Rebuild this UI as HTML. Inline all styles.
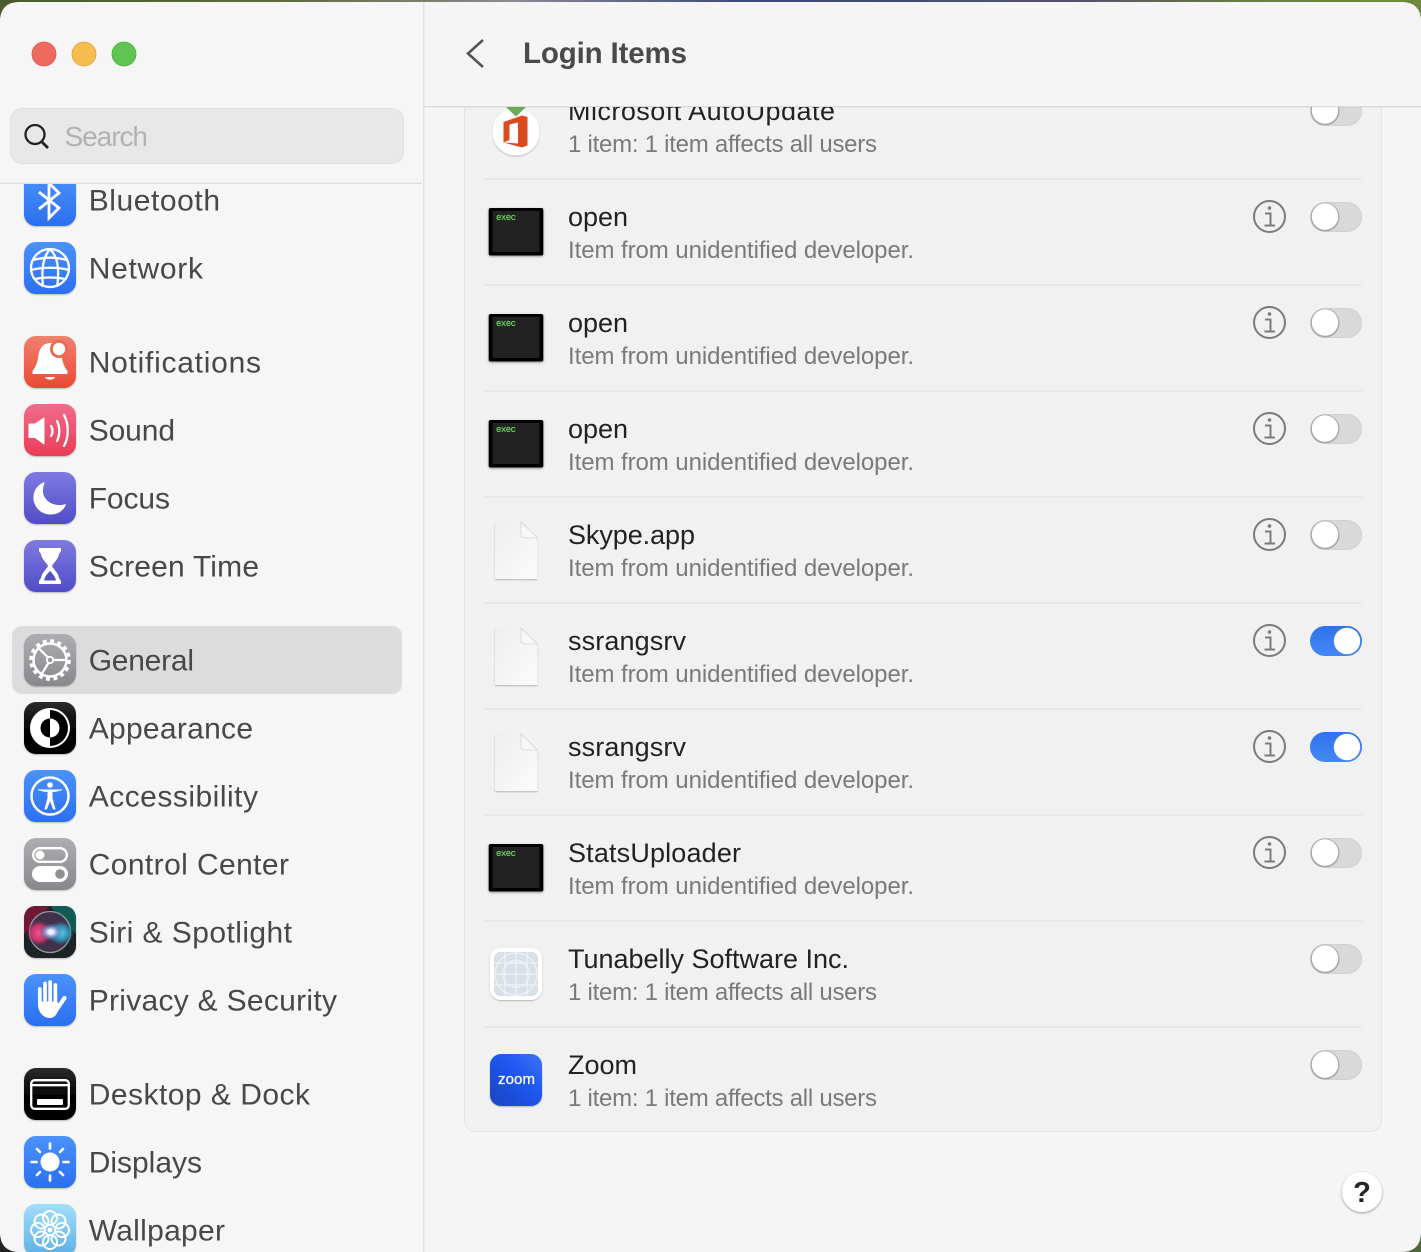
<!DOCTYPE html>
<html lang="en"><head><meta charset="utf-8"><title>Login Items</title>
<style>
html,body{margin:0;padding:0;width:1421px;height:1252px;overflow:hidden;background:#333}
svg{display:block}
text{font-family:"Liberation Sans",sans-serif}
.s{font-size:30px;fill:#484848}
.t{font-size:27px;fill:#222}
.u{font-size:24px;fill:#7a7a7a}
.x{font-size:9px;fill:#6fdc60;stroke:#6fdc60;stroke-width:.15}
</style></head><body>
<svg xmlns="http://www.w3.org/2000/svg" width="1421" height="1252" viewBox="0 0 1421 1252">
<defs>
<linearGradient id="wall" x1="0" x2="1" y1="0" y2="0"><stop offset="0" stop-color="#4a5a2a"/><stop offset=".2" stop-color="#5d6b3f"/><stop offset=".36" stop-color="#8c8a90"/><stop offset=".52" stop-color="#3e4a78"/><stop offset=".75" stop-color="#50506a"/><stop offset=".88" stop-color="#6c7d45"/><stop offset="1" stop-color="#6f8a3c"/></linearGradient>
<linearGradient id="blue" x1="0" x2="0" y1="0" y2="1"><stop offset="0" stop-color="#4a92fb"/><stop offset="1" stop-color="#2b6ff0"/></linearGradient>
<linearGradient id="red" x1="0" x2="0" y1="0" y2="1"><stop offset="0" stop-color="#f08070"/><stop offset="1" stop-color="#ea4a34"/></linearGradient>
<linearGradient id="pink" x1="0" x2="0" y1="0" y2="1"><stop offset="0" stop-color="#f06c8a"/><stop offset="1" stop-color="#ea3c58"/></linearGradient>
<linearGradient id="pur" x1="0" x2="0" y1="0" y2="1"><stop offset="0" stop-color="#7f7ae0"/><stop offset="1" stop-color="#504dc8"/></linearGradient>
<linearGradient id="gray" x1="0" x2="0" y1="0" y2="1"><stop offset="0" stop-color="#adadb2"/><stop offset="1" stop-color="#87878c"/></linearGradient>
<linearGradient id="blk" x1="0" x2="0" y1="0" y2="1"><stop offset="0" stop-color="#2b2b2b"/><stop offset=".6" stop-color="#000"/></linearGradient>
<linearGradient id="sky" x1="0" x2="0" y1="0" y2="1"><stop offset="0" stop-color="#a2def8"/><stop offset="1" stop-color="#5cb0e6"/></linearGradient>
<linearGradient id="tog" x1="0" x2="0" y1="0" y2="1"><stop offset="0" stop-color="#2f72ee"/><stop offset="1" stop-color="#4488f5"/></linearGradient>
<linearGradient id="zm" x1="1" x2="0" y1="0" y2="1"><stop offset="0" stop-color="#3f74f2"/><stop offset=".4" stop-color="#2058f2"/><stop offset="1" stop-color="#1a44c0"/></linearGradient>
<linearGradient id="doc" x1="0" x2="1" y1="0" y2="1"><stop offset="0" stop-color="#eeeeee"/><stop offset="1" stop-color="#fbfbfb"/></linearGradient>
<radialGradient id="siriA" cx=".5" cy=".5" r=".5"><stop offset="0" stop-color="#ffffff"/><stop offset=".25" stop-color="#e4e8fa"/><stop offset=".6" stop-color="#7a90d8" stop-opacity=".75"/><stop offset="1" stop-color="#4a5a80" stop-opacity="0"/></radialGradient>
<radialGradient id="siriR" cx=".5" cy=".5" r=".5"><stop offset="0" stop-color="#f8508c"/><stop offset=".6" stop-color="#d83870" stop-opacity=".85"/><stop offset="1" stop-color="#a02050" stop-opacity="0"/></radialGradient>
<radialGradient id="siriC" cx=".5" cy=".5" r=".5"><stop offset="0" stop-color="#58d8f0"/><stop offset=".6" stop-color="#3098c0" stop-opacity=".85"/><stop offset="1" stop-color="#208090" stop-opacity="0"/></radialGradient>
<filter id="sh" x="-10%" y="-10%" width="120%" height="125%"><feDropShadow dx="0" dy="1" stdDeviation=".8" flood-color="#000" flood-opacity=".25"/></filter>
<filter id="sh2" x="-20%" y="-20%" width="140%" height="150%"><feDropShadow dx="0" dy="1" stdDeviation="1.400" flood-color="#000" flood-opacity=".4"/></filter>
<clipPath id="sideclip"><rect x="0" y="184" width="422" height="1068"/></clipPath>
<clipPath id="mainclip"><rect x="424" y="107" width="997" height="1145"/></clipPath>
<clipPath id="win"><path d="M20 2H1401Q1421 2 1421 22V1232Q1421 1252 1401 1252H20Q0 1252 0 1232V22Q0 2 20 2Z"/></clipPath>

<g id="ext"><rect x="488.700" y="208" width="54.600" height="47.500" rx="2" fill="#000" filter="url(#sh2)"/><rect x="492.500" y="211" width="47" height="41" fill="#222"/></g>
<g id="paper"><g filter="url(#sh)"><path d="M495 522H521L537.500 538V579H495Z" fill="url(#doc)"/></g><path d="M521 522V534Q521 538 525 538H537.500Z" fill="#f7f7f7" stroke="#d4d4d4" stroke-width=".8"/></g>
<g id="info" fill="none" stroke="#7b7b7b"><circle cx="1269.500" cy="216.500" r="15.500" stroke-width="2"/><circle cx="1269.500" cy="208" r="1.800" fill="#7b7b7b" stroke="none"/><path d="M1265 213.500H1270.500V225M1264.500 225.500H1275" stroke-width="2"/></g>
<g id="off"><rect x="1310" y="202" width="52" height="30" rx="15" fill="#d9d9d9"/><rect x="1310.500" y="202.500" width="51" height="29" rx="14.500" fill="none" stroke="#000" stroke-opacity=".04"/><circle cx="1325" cy="217" r="14.500" fill="#a8a8a8"/><circle cx="1325" cy="216.500" r="13.200" fill="#fff"/></g>
<g id="on"><rect x="1310" y="202" width="52" height="30" rx="15" fill="url(#tog)"/><circle cx="1347" cy="217" r="13.200" fill="#fff"/></g>
</defs>

<rect width="1421" height="1252" fill="url(#wall)"/>
<rect y="1230" width="60" height="22" fill="#222"/>
<rect x="1395" y="1225" width="26" height="27" fill="#4c6a3a"/>

<g clip-path="url(#win)">
<rect width="1421" height="1252" fill="#f5f5f5"/>
<rect width="423" height="1252" fill="#f6f6f6"/>
<rect x="423" y="0" width="1.500" height="1252" fill="#e3e3e3"/>

<!-- list panel -->
<rect x="464.500" y="80" width="917" height="1051.500" rx="11" fill="#f1f1f1" stroke="#e5e5e5"/>

<g clip-path="url(#mainclip)">
<!-- Microsoft row -->
<circle cx="516" cy="132" r="23.500" fill="#fff" filter="url(#sh)"/>
<path d="M504 105H528L516 116.500Z" fill="#6cab52"/>
<path d="M503.500 122L522 115.500L527.500 117V145.500L522 147.500L503.500 142.500L518 143.500V122.500L509.500 124.500V140L503.500 142.500Z" fill="#dc4a22"/>
<text class="t" x="568" y="120" textLength="267">Microsoft AutoUpdate</text>
<text class="u" x="568" y="152" textLength="309">1 item: 1 item affects all users</text>
<use href="#off" y="-106"/>

<g fill="#e8e8e8">
<rect x="484" y="178" width="878" height="2"/><rect x="484" y="284" width="878" height="2"/><rect x="484" y="390" width="878" height="2"/><rect x="484" y="496" width="878" height="2"/><rect x="484" y="602" width="878" height="2"/><rect x="484" y="708" width="878" height="2"/><rect x="484" y="814" width="878" height="2"/><rect x="484" y="920" width="878" height="2"/><rect x="484" y="1026" width="878" height="2"/>
</g>

<!-- open 1 -->
<use href="#ext"/><text class="x" x="496" y="220" textLength="20" style="font-family:'Liberation Mono',monospace">exec</text>
<text class="t" x="568" y="226" textLength="60">open</text>
<text class="u" x="568" y="258" textLength="346">Item from unidentified developer.</text>
<use href="#info"/><use href="#off"/>
<!-- open 2 -->
<use href="#ext" y="106"/><text class="x" x="496" y="326" textLength="20" style="font-family:'Liberation Mono',monospace">exec</text>
<text class="t" x="568" y="332" textLength="60">open</text>
<text class="u" x="568" y="364" textLength="346">Item from unidentified developer.</text>
<use href="#info" y="106"/><use href="#off" y="106"/>
<!-- open 3 -->
<use href="#ext" y="212"/><text class="x" x="496" y="432" textLength="20" style="font-family:'Liberation Mono',monospace">exec</text>
<text class="t" x="568" y="438" textLength="60">open</text>
<text class="u" x="568" y="470" textLength="346">Item from unidentified developer.</text>
<use href="#info" y="212"/><use href="#off" y="212"/>
<!-- Skype -->
<use href="#paper"/>
<text class="t" x="568" y="544" textLength="127">Skype.app</text>
<text class="u" x="568" y="576" textLength="346">Item from unidentified developer.</text>
<use href="#info" y="318"/><use href="#off" y="318"/>
<!-- ssrangsrv 1 -->
<use href="#paper" y="106"/>
<text class="t" x="568" y="650" textLength="118">ssrangsrv</text>
<text class="u" x="568" y="682" textLength="346">Item from unidentified developer.</text>
<use href="#info" y="424"/><use href="#on" y="424"/>
<!-- ssrangsrv 2 -->
<use href="#paper" y="212"/>
<text class="t" x="568" y="756" textLength="118">ssrangsrv</text>
<text class="u" x="568" y="788" textLength="346">Item from unidentified developer.</text>
<use href="#info" y="530"/><use href="#on" y="530"/>
<!-- StatsUploader -->
<use href="#ext" y="636"/><text class="x" x="496" y="856" textLength="20" style="font-family:'Liberation Mono',monospace">exec</text>
<text class="t" x="568" y="862" textLength="173">StatsUploader</text>
<text class="u" x="568" y="894" textLength="346">Item from unidentified developer.</text>
<use href="#info" y="636"/><use href="#off" y="636"/>
<!-- Tunabelly -->
<rect x="490" y="948" width="52" height="52" rx="11" fill="#fff" filter="url(#sh)"/>
<rect x="494" y="952" width="44" height="44" rx="6" fill="#d9e1e6"/>
<g fill="none" stroke="#eef2f4" stroke-width="1.200"><circle cx="516" cy="974" r="21"/><circle cx="516" cy="974" r="13.500"/><path d="M494 974H538M516 952V996M494 963H538M494 985H538M505 952V996M527 952V996"/></g>
<text class="t" x="568" y="968" textLength="281">Tunabelly Software Inc.</text>
<text class="u" x="568" y="1000" textLength="309">1 item: 1 item affects all users</text>
<use href="#off" y="742"/>
<!-- Zoom -->
<rect x="490" y="1054" width="52" height="52" rx="11" fill="url(#zm)" filter="url(#sh)"/>
<text x="498" y="1084" font-size="15" textLength="37" fill="#fff" stroke="#fff" stroke-width=".25">zoom</text>
<text class="t" x="568" y="1074" textLength="69">Zoom</text>
<text class="u" x="568" y="1106" textLength="309">1 item: 1 item affects all users</text>
<use href="#off" y="848"/>
</g>

<!-- header -->
<rect x="424.500" y="0" width="997" height="106" fill="#f5f5f5"/>
<rect x="424.500" y="106" width="997" height="1" fill="#dadada"/>
<rect x="424.500" y="107" width="997" height="1" fill="#000" opacity=".03"/>
<path d="M483 40L468 53.500L483 67" fill="none" stroke="#555" stroke-width="2.600"/>
<text x="523" y="63" font-size="29.500" font-weight="700" textLength="164" fill="#4a4a4a">Login Items</text>

<!-- help -->
<circle cx="1362" cy="1192" r="20" fill="#fff" filter="url(#sh2)"/>
<text x="1362" y="1202" font-size="29" font-weight="700" text-anchor="middle" fill="#262626">?</text>

<!-- traffic lights -->
<circle cx="44" cy="54" r="12" fill="#ee6a5f" stroke="#d9564c" stroke-width=".8"/>
<circle cx="84" cy="54" r="12" fill="#f5bd4f" stroke="#dfa43a" stroke-width=".8"/>
<circle cx="124" cy="54" r="12" fill="#61c554" stroke="#50ad44" stroke-width=".8"/>

<!-- search -->
<rect x="10.500" y="108.500" width="393" height="55" rx="12" fill="#e8e8e8" stroke="#e0e0e0"/>
<circle cx="35" cy="134.500" r="9.500" fill="none" stroke="#222" stroke-width="2.300"/>
<path d="M41.500 141.500L48 148" stroke="#222" stroke-width="2.800"/>
<text x="64.500" y="146" font-size="28" textLength="83.500" fill="#b2b2b2">Search</text>
<rect x="0" y="182.500" width="422" height="1.500" fill="#dedede"/>

<!-- sidebar -->
<g clip-path="url(#sideclip)">
<rect x="12" y="626" width="390" height="68" rx="10" fill="#dcdcdc"/>

<!-- Bluetooth -->
<g transform="translate(24 174)"><rect width="52" height="52" rx="12" fill="url(#blue)" filter="url(#sh)"/><path d="M15 18L35 34L25 44V9L35 19L15 35" fill="none" stroke="#fff" stroke-width="2.800"/></g>
<text class="s" x="88.700" y="210.500" textLength="131.300">Bluetooth</text>

<!-- Network -->
<g transform="translate(24 242)"><rect width="52" height="52" rx="12" fill="url(#blue)" filter="url(#sh)"/><g fill="none" stroke="#fff" stroke-width="2.300"><circle cx="26" cy="26" r="19"/><path d="M26 7C20 14 17 24 19 45M26 7C33 14 36 25 33 45M9 18C20 15 32 15 43 18M7 28C18 25 34 25 45 28M11 37C20 35 32 35 41 37"/></g></g>
<text class="s" x="88.700" y="278.500" textLength="114.300">Network</text>

<!-- Notifications -->
<g transform="translate(24 336)"><rect width="52" height="52" rx="12" fill="url(#red)" filter="url(#sh)"/><path d="M26 7C18 7 15 14 14 22C13 28 11 32 8.500 35V38H43.500V35C41 32 39 28 38 22C37 14 33 7 26 7Z" fill="#fff"/><path d="M21 41H31C30 44.500 22 44.500 21 41Z" fill="#fff"/><circle cx="35" cy="13" r="9" fill="#ee6650"/><circle cx="35" cy="13" r="6.200" fill="#fff"/></g>
<text class="s" x="88.700" y="372.500" textLength="172.300">Notifications</text>

<!-- Sound -->
<g transform="translate(24 404)"><rect width="52" height="52" rx="12" fill="url(#pink)" filter="url(#sh)"/><path d="M5 20H11L20 14V40L11 33.500H5Z" fill="#fff" stroke="#fff" stroke-width="1" stroke-linejoin="round"/><g fill="none" stroke="#fff" stroke-width="2.300" stroke-linecap="round"><path d="M27 22C29 25 29 29 27 32"/><path d="M33 17C36 23 36 31 33 37"/><path d="M40 11C45 20 45 33 40 42"/></g></g>
<text class="s" x="88.700" y="440.500" textLength="86.300">Sound</text>

<!-- Focus -->
<g transform="translate(24 472)"><rect width="52" height="52" rx="12" fill="url(#pur)" filter="url(#sh)"/><path d="M21 10C11 13 8 23 10 30C13 41 25 45 34 41C38 39 41 36 42 32C32 35 23 31 20 24C18 19 19 14 21 10Z" fill="#fff"/></g>
<text class="s" x="88.700" y="508.500" textLength="81.300">Focus</text>

<!-- Screen Time -->
<g transform="translate(24 540)"><rect width="52" height="52" rx="12" fill="url(#pur)" filter="url(#sh)"/><path d="M15 8H37V11L35 14C34 20 29 23 28 26C29 29 34 32 35 38L37 41V44H15V41L17 38C18 32 23 29 24 26C23 23 18 20 17 14L15 11Z" fill="#fff"/><path d="M26 31C24 33 21 36 20 40.500H32C31 36 28 33 26 31Z" fill="#5450c8"/></g>
<text class="s" x="88.700" y="576.500" textLength="170.300">Screen Time</text>

<!-- General -->
<g transform="translate(24 634)"><rect width="52" height="52" rx="12" fill="url(#gray)" filter="url(#sh)"/><g fill="none" stroke="#fff"><circle cx="26" cy="26" r="16.500" stroke-width="2.500"/><circle cx="26" cy="26" r="18.800" stroke-width="4" stroke-dasharray="3.900 3.480"/><circle cx="26" cy="26" r="3.200" stroke-width="1.800"/><path d="M29 26H43M24 23.500L13.500 13M24.500 29L17 41" stroke-width="2.200"/></g></g>
<text class="s" x="88.700" y="670.500" textLength="105.300">General</text>

<!-- Appearance -->
<g transform="translate(24 702)"><rect width="52" height="52" rx="12" fill="url(#blk)" filter="url(#sh)"/><circle cx="26" cy="26" r="20" fill="#fff"/><path d="M26 8A18 18 0 0 1 26 44Z" fill="#000"/><circle cx="26" cy="26" r="9.500" fill="#fff"/><path d="M26 16.500A9.500 9.500 0 0 0 26 35.500Z" fill="#000"/></g>
<text class="s" x="88.700" y="738.500" textLength="164.300">Appearance</text>

<!-- Accessibility -->
<g transform="translate(24 770)"><rect width="52" height="52" rx="12" fill="url(#blue)" filter="url(#sh)"/><circle cx="26" cy="26" r="18.500" fill="none" stroke="#fff" stroke-width="2.500"/><circle cx="26" cy="15" r="2.800" fill="#fff"/><path d="M14 19.500C18 21 22 21.500 24 21.500V28L21 39H22.500L26 30L29.500 39H31L28 28V21.500C30 21.500 34 21 38 19.500" fill="#fff" stroke="#fff" stroke-width="1" stroke-linejoin="round"/></g>
<text class="s" x="88.700" y="806.500" textLength="169.300">Accessibility</text>

<!-- Control Center -->
<g transform="translate(24 838)"><rect width="52" height="52" rx="12" fill="url(#gray)" filter="url(#sh)"/><rect x="9.200" y="10.200" width="33.600" height="13.600" rx="6.800" fill="none" stroke="#fff" stroke-width="2.400"/><circle cx="16" cy="17" r="4.500" fill="#fff"/><rect x="8" y="28" width="36" height="16" rx="8" fill="#fff"/><circle cx="36" cy="36" r="4.800" fill="#8f8f94"/></g>
<text class="s" x="88.700" y="874.500" textLength="200.300">Control Center</text>

<!-- Siri -->
<g transform="translate(24 906)"><rect width="52" height="52" rx="12" fill="#1a2028" filter="url(#sh)"/><path d="M0 14Q0 0 12 0H26L0 28Z" fill="#7a1838" opacity=".9"/><path d="M52 14Q52 0 40 0H26L52 28Z" fill="#14605a" opacity=".9"/><circle cx="26" cy="26" r="21" fill="#40304a"/><circle cx="26" cy="26" r="20.500" fill="none" stroke="#9ab0a8" stroke-width="1.300" opacity=".85"/><ellipse cx="15" cy="27" rx="13" ry="13" fill="url(#siriR)"/><ellipse cx="37" cy="27" rx="13" ry="12" fill="url(#siriC)"/><ellipse cx="27" cy="26" rx="12" ry="9" fill="url(#siriA)"/></g>
<text class="s" x="88.700" y="942.500" textLength="203.300">Siri &amp; Spotlight</text>

<!-- Privacy -->
<g transform="translate(24 974)"><rect width="52" height="52" rx="12" fill="url(#blue)" filter="url(#sh)"/><g fill="#fff" stroke="#fff" stroke-linecap="round"><path d="M16 28H33L35 33C33 40 30 43.500 26 43.500C20 43.500 15.500 39 14.500 32V26Z" stroke-width="1"/><path d="M15.800 15V30M21 9.500V29M26.200 8V29M31.400 11V30" stroke-width="3.700" fill="none"/><path d="M33 35L40.500 24" stroke-width="4.200" fill="none"/></g></g>
<text class="s" x="88.700" y="1010.500" textLength="248.300">Privacy &amp; Security</text>

<!-- Desktop & Dock -->
<g transform="translate(24 1068)"><rect width="52" height="52" rx="12" fill="url(#blk)" filter="url(#sh)"/><rect x="7.200" y="12.200" width="37.600" height="28.600" rx="3.500" fill="none" stroke="#fff" stroke-width="2.300"/><rect x="8" y="16" width="36" height="2.300" fill="#fff"/><rect x="13" y="31" width="26" height="6" rx="1" fill="#fff"/></g>
<text class="s" x="88.700" y="1104.500" textLength="221.300">Desktop &amp; Dock</text>

<!-- Displays -->
<g transform="translate(24 1136)"><rect width="52" height="52" rx="12" fill="url(#blue)" filter="url(#sh)"/><circle cx="26" cy="26" r="9.500" fill="#fff"/><g stroke="#fff" stroke-width="2.600" stroke-linecap="round"><path d="M26 7.500V12.500M26 39.500V44.500M7.500 26H12.500M39.500 26H44.500M13 13L16 16M36 36L39 39M39 13L36 16M16 36L13 39"/></g></g>
<text class="s" x="88.700" y="1172.500" textLength="113.300">Displays</text>

<!-- Wallpaper -->
<g transform="translate(24 1204)"><rect width="52" height="52" rx="12" fill="url(#sky)" filter="url(#sh)"/><g fill="none" stroke="#fff" stroke-width="2"><circle cx="26" cy="14" r="7"/><circle cx="26" cy="38" r="7"/><circle cx="14" cy="26" r="7"/><circle cx="38" cy="26" r="7"/><circle cx="17.500" cy="17.500" r="7"/><circle cx="34.500" cy="17.500" r="7"/><circle cx="17.500" cy="34.500" r="7"/><circle cx="34.500" cy="34.500" r="7"/></g><circle cx="26" cy="26" r="2.500" fill="#fff"/></g>
<text class="s" x="88.700" y="1240.500" textLength="136.300">Wallpaper</text>
</g>
</g>
</svg>
</body></html>
